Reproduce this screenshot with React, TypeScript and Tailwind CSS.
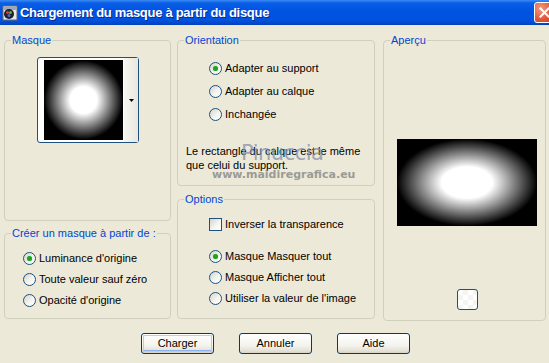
import React from "react";

const font = { fontFamily: '"Liberation Sans", Arial, sans-serif' };

function Radio({ checked }: { checked?: boolean }) {
  return (
    <span className="w-[13px] h-[13px] shrink-0 rounded-full border border-[#1C5180] bg-[linear-gradient(135deg,#D4D4CB_0%,#F4F4F0_55%,#FFFFFF_100%)] flex items-center justify-center">
      {checked && <span className="w-[5px] h-[5px] rounded-full bg-[#21A121] shadow-[0_0_1px_#5FD35F]" />}
    </span>
  );
}

function RadioRow({ checked, label, h }: { checked?: boolean; label: string; h: string }) {
  return (
    <div className={`flex items-center gap-[3px] ${h}`}>
      <Radio checked={checked} />
      <span className="text-[11px] leading-[13px] text-black whitespace-nowrap">{label}</span>
    </div>
  );
}

function Group({ title, className, children }: { title: string; className: string; children?: React.ReactNode }) {
  return (
    <fieldset className={`border border-[#D0D0BF] rounded-[4px] ${className}`}>
      <legend className="ml-[6px] px-[1px] text-[11px] leading-[12px] text-[#0046D5]">{title}</legend>
      {children}
    </fieldset>
  );
}

function Button({ label, def }: { label: string; def?: boolean }) {
  return (
    <div className="w-[73px] h-[21px] rounded-[3px] border border-[#003C74] bg-[linear-gradient(to_bottom,#FFFFFF_0%,#F4F3EE_60%,#E3E0D4_90%,#D6D0C5_100%)] p-px">
      <div
        className={`w-full h-full rounded-[2px] flex items-center justify-center text-[11px] text-black ${
          def ? "shadow-[inset_0_0_0_1px_#B6CCF5,inset_0_-1px_0_1px_#8DB2F0]" : ""
        }`}
      >
        {label}
      </div>
    </div>
  );
}

export default function App() {
  return (
    <div className="w-[549px] h-[363px] bg-[#ECE9D8] overflow-hidden relative" style={font}>
      {/* Title bar */}
      <div className="h-[25px] flex items-center bg-[linear-gradient(to_bottom,#3C8CF5_0%,#0A5FE6_12%,#0054E3_40%,#0052DF_80%,#0046C8_96%,#003FB0_100%)] relative">
        <div className="ml-[2px] w-[16px] h-[16px]">
          <svg width="16" height="16" viewBox="0 0 16 16">
            <rect x="1" y="1" width="14" height="14" fill="#E8E8E8" stroke="#6A6A6A" />
            <rect x="2" y="2" width="12" height="3" fill="#9AA6C8" />
            <circle cx="7" cy="9" r="5" fill="#202020" />
            <circle cx="5.5" cy="7.5" r="1.5" fill="#E23A3A" />
            <circle cx="8.5" cy="7.5" r="1.5" fill="#3FC23F" />
            <circle cx="7" cy="10.5" r="1.5" fill="#3A6BE2" />
          </svg>
        </div>
        <span className="ml-[2px] text-white font-bold text-[13px] tracking-[-0.3px] leading-none [text-shadow:1px_1px_0_#0A2A8A]">
          Chargement du masque à partir du disque
        </span>
        <div className="absolute left-[534px] top-[2px] w-[21px] h-[21px] rounded-[3px] border border-white bg-[radial-gradient(circle_at_30%_30%,#F29B7E_0%,#E2583E_55%,#C7391C_100%)] flex items-center justify-center">
          <svg width="11" height="11" viewBox="0 0 11 11">
            <path d="M1.5 1.5 L9.5 9.5 M9.5 1.5 L1.5 9.5" stroke="white" strokeWidth="2" strokeLinecap="square" />
          </svg>
        </div>
      </div>

      {/* Body */}
      <div className="flex items-start pl-[4px] pt-[9px]">
        {/* Left column */}
        <div className="w-[167px] flex flex-col gap-[6px]">
          <Group title="Masque" className="h-[187px]">
            <div className="pt-[11px] pl-[32px]">
              <div className="w-[102px] h-[86px] rounded-[3px] border border-[#1C5180] bg-white flex">
                <div className="pl-[6px] pt-[2px]">
                  <div className="w-[79px] h-[80px] bg-[radial-gradient(circle_closest-side,#FFFFFF_0%,#FFFFFF_34%,#000000_100%)]" />
                </div>
                <div className="ml-auto w-[14px] h-full bg-[linear-gradient(to_right,#F7F6F1,#E9E7DD)] flex items-center justify-center">
                  <svg width="5" height="3" viewBox="0 0 5 3">
                    <path d="M0 0 H5 L2.5 3 Z" fill="black" />
                  </svg>
                </div>
              </div>
            </div>
          </Group>
          <Group title="Créer un masque à partir de :" className="h-[92px]">
            <div className="pt-[9px] pl-[18px]">
              <RadioRow checked label="Luminance d'origine" h="h-[21px]" />
              <RadioRow label="Toute valeur sauf zéro" h="h-[21px]" />
              <RadioRow label="Opacité d'origine" h="h-[21px]" />
            </div>
          </Group>
        </div>

        {/* Middle column */}
        <div className="ml-[6px] w-[198px] flex flex-col gap-[7px]">
          <Group title="Orientation" className="h-[152px]">
            <div className="pt-[11px] pl-[31px]">
              <RadioRow checked label="Adapter au support" h="h-[23px]" />
              <RadioRow label="Adapter au calque" h="h-[23px]" />
              <RadioRow label="Inchangée" h="h-[23px]" />
            </div>
            <div className="mt-[18px] pl-[8px] text-[11px] leading-[14px] text-black">
              Le rectangle du calque est le même
              <br />
              que celui du support.
            </div>
          </Group>
          <Group title="Options" className="h-[126px]">
            <div className="pt-[8px] pl-[31px]">
              <div className="flex items-center gap-[3px] h-[23px]">
                <span className="w-[13px] h-[13px] shrink-0 border border-[#1C5180] bg-[linear-gradient(135deg,#D4D4CB_0%,#F4F4F0_55%,#FFFFFF_100%)]" />
                <span className="text-[11px] leading-[13px] text-black">Inverser la transparence</span>
              </div>
              <div className="mt-[10px]">
                <RadioRow checked label="Masque Masquer tout" h="h-[21px]" />
                <RadioRow label="Masque Afficher tout" h="h-[21px]" />
                <RadioRow label="Utiliser la valeur de l'image" h="h-[21px]" />
              </div>
            </div>
          </Group>
        </div>

        {/* Right column */}
        <div className="ml-[8px] w-[163px]">
          <Group title="Aperçu" className="h-[287px]">
            <div className="pt-[93px] pl-[13px] flex flex-col items-start">
              <div className="w-[140px] h-[87px] bg-[radial-gradient(ellipse_closest-side,#FFFFFF_0%,#FFFFFF_36%,#000000_100%)]" />
              <div className="w-[140px] flex justify-center mt-[63px]">
                <div className="w-[21px] h-[21px] rounded-[3px] border border-[#1C5180] bg-[repeating-conic-gradient(#F4F4F0_0_25%,#FFFFFF_0_50%)] bg-[length:10px_10px]" />
              </div>
            </div>
          </Group>
        </div>
      </div>

      {/* Buttons */}
      <div className="flex gap-[25px] pl-[141px] mt-[12px]">
        <Button label="Charger" def />
        <Button label="Annuler" />
        <Button label="Aide" />
      </div>

      {/* Watermark */}
      <div className="absolute left-[241px] top-[142px] text-[21px] leading-[22px] tracking-[-0.5px] text-[#8690AC] opacity-75 pointer-events-none" style={{ fontFamily: '"DejaVu Sans", sans-serif' }}>
        Pinuccia
      </div>
      <div className="absolute left-[212px] top-[169px] text-[11px] leading-[12px] font-bold text-[#7A7A7A] opacity-70 pointer-events-none" style={{ fontFamily: '"DejaVu Sans", sans-serif' }}>
        www.maidiregrafica.eu
      </div>
    </div>
  );
}
